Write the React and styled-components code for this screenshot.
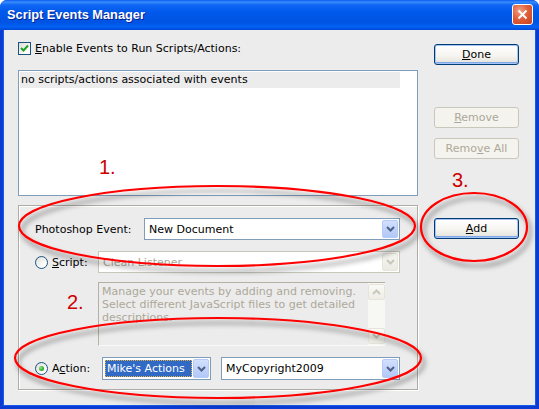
import React from 'react';
import styled, { createGlobalStyle } from 'styled-components';

const GlobalStyle = createGlobalStyle`
  html, body {
    margin: 0;
    padding: 0;
    background: #fff;
  }
  body {
    font-family: "DejaVu Sans", Verdana, sans-serif;
    font-size: 11px;
    color: #000;
  }
`;

const Window = styled.div`
  position: relative;
  width: 539px;
  height: 409px;
  display: flex;
  flex-direction: column;
  overflow: hidden;
  border-radius: 7px 7px 0 0;
  background: #0a3cd4;
`;

const TitleBar = styled.div`
  height: 30px;
  flex: none;
  box-sizing: border-box;
  display: flex;
  align-items: center;
  padding: 0 6px 1px 7px;
  background: linear-gradient(
    to bottom,
    #0a5cf2 0%,
    #3a8cfb 7%,
    #1067f5 16%,
    #0058ea 40%,
    #0054e3 75%,
    #0062f4 90%,
    #0046d4 100%
  );
`;

const Title = styled.div`
  flex: 1;
  color: #fff;
  font-family: "Liberation Sans", Arial, sans-serif;
  font-weight: bold;
  font-size: 12.8px;
  text-shadow: 1px 1px 0 #0a1f8f;
`;

const CloseButton = styled.div`
  width: 21px;
  height: 21px;
  box-sizing: border-box;
  border: 1px solid #fff;
  border-radius: 3px;
  display: flex;
  align-items: center;
  justify-content: center;
  background: radial-gradient(circle at 35% 30%, #f0a080 0%, #e0603c 45%, #c8401c 100%);
`;

const Client = styled.div`
  flex: 1;
  display: flex;
  gap: 16px;
  padding: 11px 17px 0 15px;
  background: #ececec;
  border: 3px solid #0a3cd4;
  border-top: none;
  box-shadow: inset 1px 0 0 #1a5ae8, inset -1px 0 0 #1a5ae8, inset 0 -1px 0 #1a5ae8;
`;

const LeftColumn = styled.div`
  width: 400px;
  flex: none;
  display: flex;
  flex-direction: column;
`;

const RightColumn = styled.div`
  width: 85px;
  flex: none;
  display: flex;
  flex-direction: column;
  padding-top: 3px;
`;

const CheckRow = styled.label`
  height: 15px;
  display: flex;
  align-items: center;
  gap: 4px;
`;

const CheckBox = styled.span`
  width: 13px;
  height: 13px;
  box-sizing: border-box;
  border: 1px solid #1c5180;
  background: linear-gradient(135deg, #dcdcd7 0%, #fff 80%);
  display: flex;
  align-items: center;
  justify-content: center;
`;

const Key = styled.u`
  text-decoration: underline;
`;

const ListBox = styled.div`
  margin-top: 14px;
  height: 126px;
  box-sizing: border-box;
  border: 1px solid #7f9db9;
  background: #fff;
  padding: 1px;
`;

const ListRow = styled.div`
  width: 380px;
  height: 16px;
  line-height: 16px;
  padding-left: 1px;
  box-sizing: border-box;
  background: #ececec;
  white-space: nowrap;
`;

const Group = styled.div`
  margin-top: 9px;
  height: 185px;
  box-sizing: border-box;
  border: 1px solid #aeaca4;
  box-shadow: inset 1px 1px 0 #fff, 1px 1px 0 #fff;
  padding: 12px 17px 0 16px;
  display: flex;
  flex-direction: column;
`;

const Row = styled.div`
  display: flex;
  align-items: center;
  height: ${p => p.$h || 22}px;
  margin-top: ${p => p.$gap || 0}px;
`;

const Label = styled.span`
  width: ${p => (p.$w ? `${p.$w}px` : 'auto')};
  flex: none;
  color: ${p => (p.$muted ? '#aca899' : '#000')};
  white-space: nowrap;
`;

const Radio = styled.span`
  width: 13px;
  height: 13px;
  flex: none;
  box-sizing: border-box;
  border-radius: 50%;
  border: 1px solid #1c5180;
  background: linear-gradient(135deg, #dcdcd7 0%, #fff 75%);
  margin-right: 4px;
  display: flex;
  align-items: center;
  justify-content: center;

  &::after {
    content: '';
    display: ${p => (p.$checked ? 'block' : 'none')};
    width: 5px;
    height: 5px;
    border-radius: 50%;
    background: radial-gradient(circle at 35% 35%, #8ee68a 0%, #21a121 70%);
  }
`;

const Combo = styled.div`
  width: ${p => p.$w}px;
  height: ${p => p.$h || 22}px;
  flex: none;
  box-sizing: border-box;
  margin-left: ${p => (p.$push ? 'auto' : '0')};
  border: 1px solid ${p => (p.$disabled ? '#c9c7ba' : '#7f9db9')};
  background: #fff;
  padding: 1px;
  display: flex;
`;

const ComboText = styled.div`
  flex: 1;
  display: flex;
  align-items: center;
  padding-left: 3px;
  white-space: nowrap;
  overflow: hidden;
  color: ${p => (p.$disabled ? '#aca899' : '#000')};
`;

const Highlight = styled.div`
  flex: 1;
  margin: 1px;
  padding-left: 2px;
  display: flex;
  align-items: center;
  background: #316ac5;
  color: #fff;
  outline: 1px dotted #e8b040;
  outline-offset: -1px;
  white-space: nowrap;
`;

const ComboArrow = styled.div`
  width: 16px;
  flex: none;
  box-sizing: border-box;
  border-radius: 2px;
  display: flex;
  align-items: center;
  justify-content: center;
  border: 1px solid ${p => (p.$disabled ? '#e8e6dc' : '#b5cbf7')};
  background: ${p =>
    p.$disabled
      ? 'linear-gradient(to bottom, #f7f7f3, #ebeae3)'
      : 'linear-gradient(to bottom, #d2e0fd 0%, #c1d3fb 50%, #b2c8f6 100%)'};
`;

const DescBox = styled.div`
  margin-top: 9px;
  margin-left: 63px;
  width: 287px;
  height: 64px;
  box-sizing: border-box;
  display: flex;
  border-top: 1px solid #b4b1a4;
  border-left: 1px solid #b4b1a4;
  border-bottom: 1px solid #fafaf8;
`;

const DescText = styled.div`
  flex: 1;
  padding: 2px 3px 0 3px;
  color: #aca899;
  line-height: 13px;
`;

const ScrollTrack = styled.div`
  width: 17px;
  flex: none;
  display: flex;
  flex-direction: column;
  justify-content: space-between;
  background: #f7f7f3;
`;

const ScrollButton = styled.div`
  height: 16px;
  margin: 1px 0;
  box-sizing: border-box;
  border: 1px solid #e6e4da;
  border-radius: 2px;
  background: linear-gradient(to bottom, #f9f9f6, #eeede6);
  display: flex;
  align-items: center;
  justify-content: center;
`;

const Button = styled.button`
  width: 85px;
  height: 21px;
  margin-top: ${p => p.$gap || 0}px;
  padding: 0;
  box-sizing: border-box;
  border-radius: 3px;
  font-family: "DejaVu Sans", Verdana, sans-serif;
  font-size: 11px;
  border: 1px solid ${p => (p.disabled ? '#c9c7ba' : '#003c74')};
  color: ${p => (p.disabled ? '#aca899' : '#000')};
  background: ${p =>
    p.disabled
      ? '#f4f3ee'
      : 'linear-gradient(to bottom, #ffffff 0%, #f6f5f0 55%, #e3e1d8 100%)'};
  box-shadow: ${p =>
    p.$primary ? 'inset 0 0 0 1px #a8c4f4, inset 0 -1px 0 1px #7ea6ea' : 'none'};
`;

const Annotations = styled.svg`
  position: absolute;
  left: 0;
  top: 0;
  pointer-events: none;
`;

const Marker = styled.span`
  position: absolute;
  left: ${p => p.$x}px;
  top: ${p => p.$y}px;
  font-family: "Liberation Sans", Arial, sans-serif;
  font-size: 20px;
  line-height: 20px;
  color: #cc0000;
  pointer-events: none;
`;

const Chevron = ({ color, up }) => (
  <svg width="9" height="6" viewBox="0 0 9 6">
    <polyline
      points={up ? '1,5 4.5,1.5 8,5' : '1,1 4.5,4.5 8,1'}
      fill="none"
      stroke={color}
      strokeWidth="2"
    />
  </svg>
);

const Dropdown = ({ width, height, disabled, push, selected, children }) => (
  <Combo $w={width} $h={height} $disabled={disabled} $push={push}>
    {selected ? (
      <Highlight>{children}</Highlight>
    ) : (
      <ComboText $disabled={disabled}>{children}</ComboText>
    )}
    <ComboArrow $disabled={disabled}>
      <Chevron color={disabled ? '#c9c7ba' : '#4d6185'} />
    </ComboArrow>
  </Combo>
);

export default function App() {
  return (
    <>
      <GlobalStyle />
      <Window>
        <TitleBar>
          <Title>Script Events Manager</Title>
          <CloseButton>
            <svg width="11" height="11" viewBox="0 0 11 11">
              <path d="M1.5 1.5 L9.5 9.5 M9.5 1.5 L1.5 9.5" stroke="#fff" strokeWidth="2" />
            </svg>
          </CloseButton>
        </TitleBar>

        <Client>
          <LeftColumn>
            <CheckRow>
              <CheckBox>
                <svg width="9" height="9" viewBox="0 0 9 9">
                  <path d="M1 4 L3.5 6.5 L8 1.5" fill="none" stroke="#21a121" strokeWidth="2" />
                </svg>
              </CheckBox>
              <span>
                <Key>E</Key>nable Events to Run Scripts/Actions:
              </span>
            </CheckRow>

            <ListBox>
              <ListRow>no scripts/actions associated with events</ListRow>
            </ListBox>

            <Group>
              <Row>
                <Label>Photoshop Event:</Label>
                <Dropdown width={256} push>
                  New Document
                </Dropdown>
              </Row>

              <Row $gap={11}>
                <Radio />
                <Label>
                  <Key>S</Key>cript:
                </Label>
                <Dropdown width={302} push disabled>
                  Clean Listener
                </Dropdown>
              </Row>

              <DescBox>
                <DescText>
                  Manage your events by adding and removing. Select different JavaScript files to get
                  detailed descriptions.
                </DescText>
                <ScrollTrack>
                  <ScrollButton>
                    <Chevron color="#c9c7ba" up />
                  </ScrollButton>
                  <ScrollButton>
                    <Chevron color="#c9c7ba" />
                  </ScrollButton>
                </ScrollTrack>
              </DescBox>

              <Row $gap={11} $h={23}>
                <Radio $checked />
                <Label $w={50}>
                  A<Key>c</Key>tion:
                </Label>
                <Dropdown width={109} height={23} selected>
                  Mike's Actions
                </Dropdown>
                <Dropdown width={179} height={23} push>
                  MyCopyright2009
                </Dropdown>
              </Row>
            </Group>
          </LeftColumn>

          <RightColumn>
            <Button $primary>
              <Key>D</Key>one
            </Button>
            <Button $gap={42} disabled>
              <Key>R</Key>emove
            </Button>
            <Button $gap={10} disabled>
              Remo<Key>v</Key>e All
            </Button>
            <Button $gap={59} $primary>
              <Key>A</Key>dd
            </Button>
          </RightColumn>
        </Client>

        <Annotations width="539" height="409" viewBox="0 0 539 409">
          <defs>
            <filter id="penShadow" x="-10%" y="-30%" width="120%" height="160%">
              <feDropShadow dx="3" dy="5" stdDeviation="2.6" floodColor="#000" floodOpacity="0.5" />
            </filter>
          </defs>
          <g fill="none" stroke="#f00" strokeWidth="2.2" filter="url(#penShadow)">
            <ellipse cx="217" cy="226" rx="198" ry="40" />
            <ellipse cx="218" cy="358" rx="203" ry="40" />
            <ellipse cx="474" cy="227" rx="53" ry="34" />
          </g>
        </Annotations>
        <Marker $x={99} $y={157}>1.</Marker>
        <Marker $x={67} $y={292}>2.</Marker>
        <Marker $x={452} $y={170}>3.</Marker>
      </Window>
    </>
  );
}
